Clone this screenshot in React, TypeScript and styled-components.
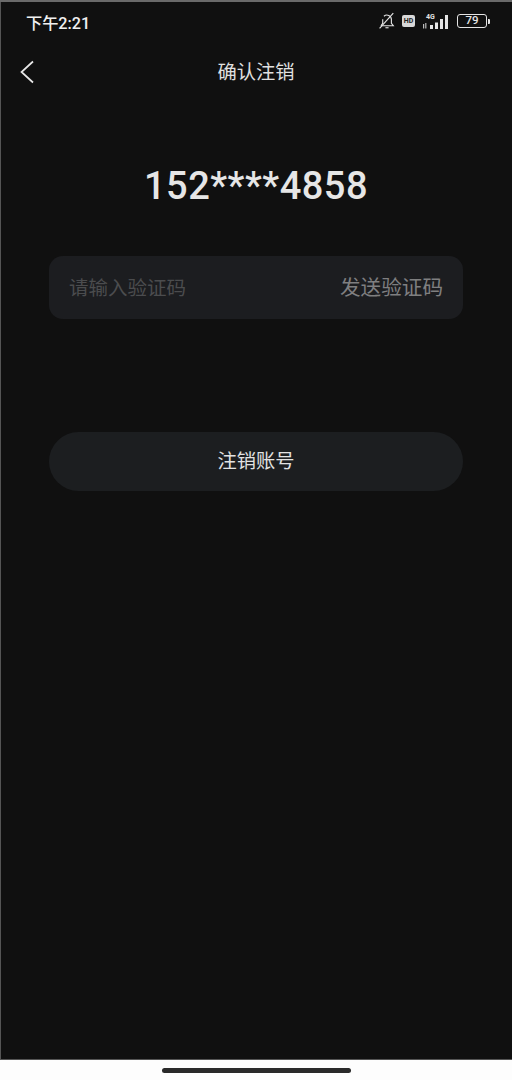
import React from "react";
import styled, { createGlobalStyle } from "styled-components";

const GlobalStyle = createGlobalStyle`
  html, body {
    margin: 0;
    padding: 0;
    background: #fdfdfd;
  }
  * {
    box-sizing: border-box;
  }
`;

const FONT = `Roboto, "Noto Sans CJK SC", sans-serif`;

const App: React.FC = () => {
  return (
    <Page>
      <GlobalStyle />
      <Screen>
        <StatusBar>
          <StatusTime>下午2:21</StatusTime>
          <StatusIcons>
            <svg width="18" height="18" viewBox="0 0 16 16" fill="none" stroke="#e4e4e4" strokeWidth="1">
              <path d="M2.6 12.2h11l-1.7-2.2V6.6a3.9 3.9 0 0 0-6.6-2.8" />
              <path d="M4.2 6.4V10l-1.6 2.2" />
              <path d="M6.6 14h2.8" />
              <path d="M1.4 14.6 13.6 1" />
            </svg>
            <HdBadge>HD</HdBadge>
            <svg width="30" height="18" viewBox="0 0 30 18" fill="#e4e4e4">
              <text x="5" y="6.5" fontSize="7" fontWeight="700" fontFamily="Roboto, sans-serif">4G</text>
              <path d="M2 12h1.2v4.5H2zM4.2 11h1.2v5.5H4.2z" opacity="0.8" />
              <rect x="9" y="13" width="3" height="4" />
              <rect x="14" y="10.5" width="3" height="6.5" />
              <rect x="19" y="7" width="3" height="10" />
              <rect x="24" y="3" width="3" height="14" />
            </svg>
            <Battery>
              <BatteryBody>79</BatteryBody>
              <BatteryTip />
            </Battery>
          </StatusIcons>
        </StatusBar>

        <NavBar>
          <BackButton>
            <svg width="16" height="24" viewBox="0 0 16 24" fill="none" stroke="#e8e8e8" strokeWidth="1.7">
              <path d="M14 1.5 2.5 12 14 22.5" />
            </svg>
          </BackButton>
          <NavTitle>确认注销</NavTitle>
        </NavBar>

        <PhoneNumber>152****4858</PhoneNumber>

        <CodeField>
          <Placeholder>请输入验证码</Placeholder>
          <SendCode>发送验证码</SendCode>
        </CodeField>

        <SubmitButton>注销账号</SubmitButton>
      </Screen>

      <HomeArea>
        <HomeHandle />
      </HomeArea>
    </Page>
  );
};

export default App;

const Page = styled.div`
  width: 512px;
  height: 1080px;
  display: flex;
  flex-direction: column;
  overflow: hidden;
  font-family: ${FONT};
`;

const Screen = styled.div`
  height: 1060px;
  display: flex;
  flex-direction: column;
  align-items: center;
  background: #101010;
  border-top: 2px solid #6a6a6a;
  border-bottom: 1px solid #555;
  box-shadow: inset 1px 0 0 #555;
`;

const StatusBar = styled.div`
  width: 100%;
  height: 38px;
  display: flex;
  align-items: center;
  justify-content: space-between;
  padding: 2px 22px 0 26px;
`;

const StatusTime = styled.span`
  font-size: 16.2px;
  font-weight: 500;
  color: #f0f0f0;
`;

const StatusIcons = styled.div`
  display: flex;
  align-items: center;
  gap: 6px;
  margin-bottom: 2px;
`;

const HdBadge = styled.span`
  width: 13px;
  height: 12px;
  border-radius: 2px;
  background: #d8d8d8;
  color: #222;
  font-size: 7px;
  font-weight: 700;
  line-height: 12px;
  text-align: center;
`;

const Battery = styled.div`
  display: flex;
  align-items: center;
  gap: 1px;
`;

const BatteryBody = styled.span`
  width: 30px;
  height: 14px;
  border: 1.4px solid #e4e4e4;
  border-radius: 3px;
  color: #e4e4e4;
  font-size: 11.5px;
  font-weight: 500;
  line-height: 11.5px;
  text-align: center;
`;

const BatteryTip = styled.span`
  width: 2px;
  height: 5px;
  background: #e4e4e4;
  border-radius: 0 1px 1px 0;
`;

const NavBar = styled.div`
  position: relative;
  width: 100%;
  height: 60px;
  display: flex;
  align-items: center;
  justify-content: center;
`;

const BackButton = styled.div`
  position: absolute;
  left: 19px;
  top: 20px;
  display: flex;
`;

const NavTitle = styled.h1`
  margin: 0;
  padding-top: 1px;
  font-size: 19.25px;
  font-weight: 400;
  color: #e0e0e0;
`;

const PhoneNumber = styled.div`
  margin-top: 62px;
  height: 48px;
  font-size: 38px;
  font-weight: 500;
  line-height: 48px;
  letter-spacing: 0.5px;
  color: #e6e6e6;
`;

const CodeField = styled.div`
  width: 414px;
  height: 63px;
  margin-top: 46px;
  padding: 0 20px 4px;
  display: flex;
  align-items: center;
  justify-content: space-between;
  border-radius: 14px;
  background: #1c1d20;
`;

const Placeholder = styled.span`
  font-size: 19.5px;
  color: #4b4c4e;
  padding-top: 2px;
`;

const SendCode = styled.span`
  font-size: 20.6px;
  color: #7f7f80;
`;

const SubmitButton = styled.button`
  width: 414px;
  height: 59px;
  margin-top: 113px;
  padding: 0 0 3px;
  border: none;
  border-radius: 30px;
  background: #1c1e20;
  color: #e2e2e2;
  font-family: ${FONT};
  font-size: 19.25px;
`;

const HomeArea = styled.div`
  flex: 1;
  display: flex;
  align-items: center;
  justify-content: center;
  background: #fdfdfd;
`;

const HomeHandle = styled.div`
  width: 189px;
  height: 5px;
  margin-top: 1px;
  border-radius: 3px;
  background: #2a2a2a;
`;
